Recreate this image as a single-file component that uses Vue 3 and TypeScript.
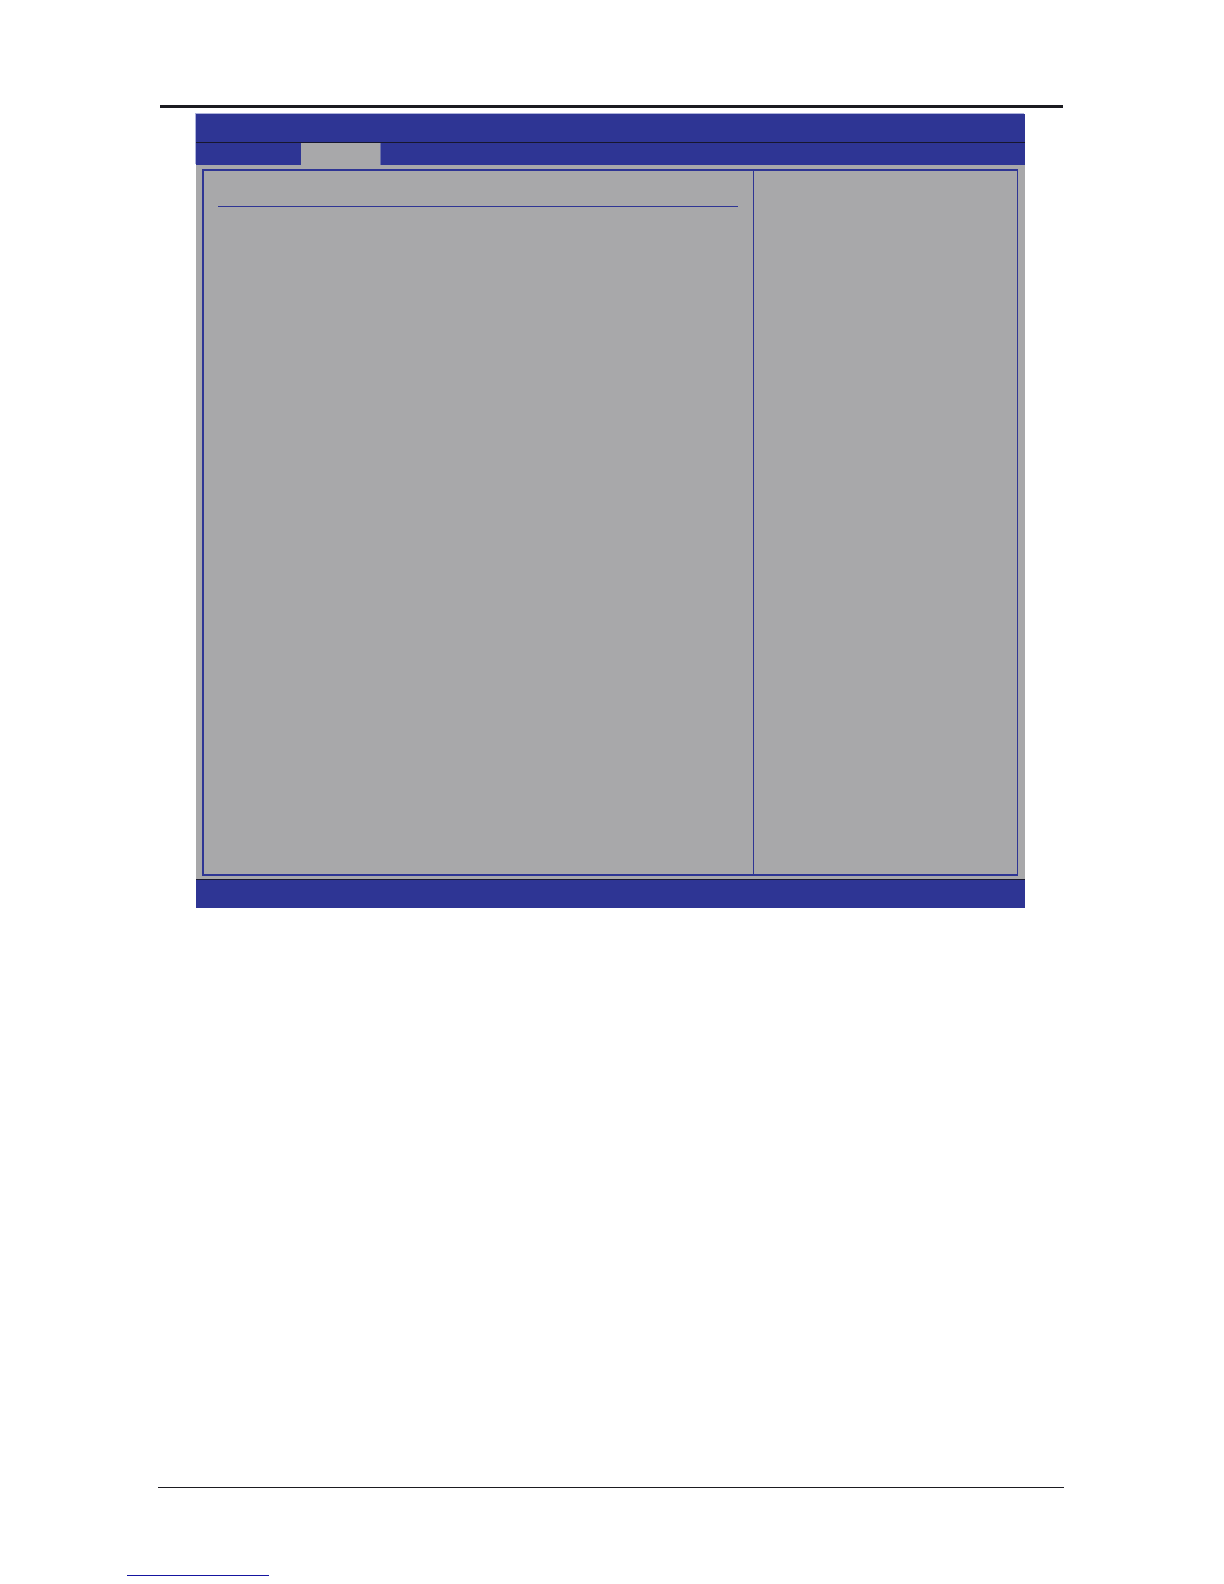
<script setup lang="ts">
const pageLink = '#contents'
</script>

<template>
  <div class="page">
    <main class="sheet">
      <section class="setup">
        <div class="head">
          <header class="title"></header>
          <nav class="tabs">
            <button type="button" class="tab"></button>
          </nav>
        </div>
        <div class="body">
          <div class="frame">
            <div class="options">
              <hr class="separator" />
            </div>
            <aside class="help"></aside>
          </div>
        </div>
        <footer class="status"></footer>
      </section>
    </main>
    <div class="foot-rule"></div>
    <a class="foot-link" :href="pageLink"></a>
  </div>
</template>

<style>
body {
  margin: 0;
  background: #ffffff;
}
</style>

<style scoped>
.page {
  box-sizing: border-box;
  display: flex;
  flex-direction: column;
  min-height: 100vh;
  padding: 105px 160px 8px;
  font-family: "Liberation Sans", Arial, sans-serif;
}

.sheet {
  flex: 1;
  margin-right: 1px;
  border-top: 3px solid #1b1b20;
}

.setup {
  display: flex;
  flex-direction: column;
  margin: 6px 38px 0 36px;
  background: #a8a8aa;
}

.head {
  background: #2e3594;
  box-shadow: -1px -1px 0 #aeb3dc;
}

.title {
  height: 28px;
  border-bottom: 1px solid #17172e;
}

.tabs {
  display: flex;
  height: 22px;
  padding-left: 105px;
}

.tab {
  width: 79px;
  padding: 0;
  border: 0;
  border-radius: 0;
  background: #a8a8aa;
  box-shadow: 1px 0 0 #6c71a8;
}

.body {
  display: flex;
  padding: 4px 7px 3px 6px;
}

.frame {
  box-sizing: border-box;
  display: grid;
  grid-template-columns: 549fr 264fr;
  flex: 1;
  min-height: 707px;
  border: 2px solid #2e3594;
  border-right-width: 1px;
}

.options {
  padding: 35px 15px 0 14px;
}

.separator {
  height: 1px;
  margin: 0;
  border: 0;
  background: #2e3594;
}

.help {
  border-left: 1px solid #2e3594;
}

.status {
  height: 28px;
  border-top: 1px solid #17172e;
  background: #2e3594;
}

.foot-rule {
  height: 1px;
  margin: 0 0 87px -2px;
  background: #1b1b20;
}

.foot-link {
  width: 142px;
  height: 0;
  margin-left: -33px;
  border-bottom: 1px solid #1515a0;
}
</style>
